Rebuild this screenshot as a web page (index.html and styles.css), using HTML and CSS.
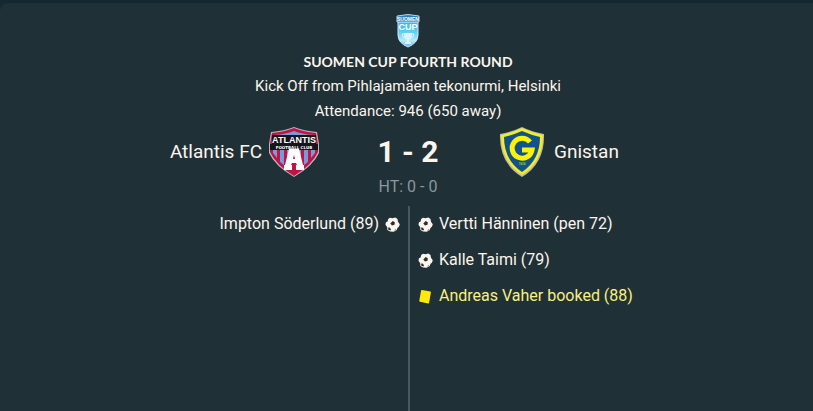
FILE: index.html
```html
<!DOCTYPE html>
<html lang="en">
<head>
  <meta charset="UTF-8">
  <meta name="viewport" content="width=device-width, initial-scale=1.0">
  <title>Atlantis FC 1 - 2 Gnistan</title>
  <link rel="stylesheet" href="styles.css">
</head>
<body>
  <!-- Shared icons -->
  <svg class="sprites" aria-hidden="true">
    <symbol id="ball" viewBox="0 0 15 15">
      <path fill="#fdf5ec" d="M5 .7 7.4 1.3 10.4.5 12.5 2 13 4.7 14.8 7.2 13.9 9.8 12.6 10.8 11.5 13.2 8.6 14.7 5 14.4 2.4 13 2.2 10.2.5 7.8.9 5.2 2.6 4.6 3.2 2Z"/>
      <path fill="#1f3037" d="M7.7 4 9.8 5.2 9.5 7.8 7 8.4 5.3 6.4ZM3 10.4 5 10.8 6 12.4 5.4 13.6 3.4 12.8ZM9.2 13.2 11 12 10.4 13.4Z"/>
    </symbol>
    <symbol id="card" viewBox="0 0 15 15">
      <path fill="#ffe80a" d="M4 .9 12.3 2.5Q13 2.7 12.9 3.4L11.1 13.8Q11 14.5 10.2 14.4L1.9 12.7Q1.1 12.5 1.3 11.8L3.1 1.5Q3.3.8 4 .9Z"/>
    </symbol>
  </svg>

  <main class="match">
    <header class="match-header">
      <svg class="cup-logo" viewBox="0 0 24 35" role="img" aria-label="Suomen Cup">
        <defs>
          <linearGradient id="cupFill" x1="0" y1="0" x2="0" y2="1">
            <stop offset="0" stop-color="#36b2ec"/>
            <stop offset=".45" stop-color="#6bd0f6"/>
            <stop offset=".75" stop-color="#b9ebfb"/>
            <stop offset="1" stop-color="#49b6ea"/>
          </linearGradient>
        </defs>
        <path d="M2 9H22V22Q22 30 12 34Q2 30 2 22Z" fill="url(#cupFill)" stroke="#d3eaf4"/>
        <path d="M1 3Q12 0 23 3V9H1Z" fill="#287fbd" stroke="#b4d5e5"/>
        <text x="12" y="8" class="cup-top">SUOMEN</text>
        <text x="12" y="17" class="cup-word">CUP</text>
        <path d="M8 20H16V23Q15 26 13 27V29H15V31H9V29H11V27Q9 26 8 23Z" fill="#d9f4fd"/>
        <path d="M8 21H6Q6 24 9 25M16 21H18Q18 24 15 25" fill="none" stroke="#d9f4fd"/>
      </svg>
      <h1 class="match-title">SUOMEN CUP FOURTH ROUND</h1>
      <p class="match-info">Kick Off from Pihlajamäen tekonurmi, Helsinki</p>
      <p class="match-info">Attendance: 946 (650 away)</p>
    </header>

    <section class="scoreboard">
      <div class="team home">
        <span class="team-name">Atlantis FC</span>
        <svg class="team-logo" viewBox="0 0 52 52" role="img" aria-label="Atlantis FC logo">
          <path d="M26 1Q36 5 49 6L51 18V27Q45 40 26 51Q7 40 1 27V18L3 6Q16 5 26 1Z" fill="#c3b4bb"/>
          <path d="M26 2Q36 6 48 7L50 18V26Q44 39 26 50Q8 39 2 26V18L4 7Q16 6 26 2Z" fill="#bd1645"/>
          <path fill="#7899dc" d="M7 9Q18 8 26 5Q34 8 45 9V13H7ZM5 22H9V32L5 27ZM12 22H16V39L12 36ZM19 22H23V44L19 41ZM29 22H33V41L29 44ZM36 22H40V36L36 39ZM43 22H47V27L43 32Z"/>
          <path fill="#17151b" d="M4 9H48V18H50V24H2V18H4Z"/>
          <text x="26" y="17" class="atl-name">ATLANTIS</text>
          <text x="26" y="23" class="atl-sub">FOOTBALL CLUB</text>
          <path fill="#fff" fill-rule="evenodd" d="M21 23H31L35 39H36V44H28V39H29L28 37H24L23 39H24V44H16V39H17ZM26 29 25 33H27Z"/>
        </svg>
      </div>
      <div class="score">1 - 2</div>
      <div class="team away">
        <svg class="team-logo" viewBox="0 0 52 52" role="img" aria-label="Gnistan logo">
          <path d="M26 1Q36 6 48 8Q49 37 26 51Q3 37 4 8Q16 6 26 1Z" fill="#b9bcae"/>
          <path d="M26 2Q36 7 47 9Q47 36 26 49Q5 36 5 9Q16 7 26 2Z" fill="#f4ed20"/>
          <path d="M26 5Q35 9 44 11Q44 34 26 46Q8 34 8 11Q17 9 26 5Z" fill="#10538b"/>
          <path d="M34 16A10 10 0 1 0 36 24H26" fill="none" stroke="#fff10b" stroke-width="5"/>
          <text x="26" y="39" class="gni-year">1924</text>
        </svg>
        <span class="team-name">Gnistan</span>
      </div>
    </section>
    <p class="half-time">HT: 0 - 0</p>

    <section class="events">
      <ul class="event-list home-events">
        <li>Impton Söderlund (89)<svg class="icon" role="img" aria-label="Goal"><use href="#ball"/></svg></li>
      </ul>
      <ul class="event-list away-events">
        <li><svg class="icon" role="img" aria-label="Goal"><use href="#ball"/></svg>Vertti Hänninen (pen 72)</li>
        <li><svg class="icon" role="img" aria-label="Goal"><use href="#ball"/></svg>Kalle Taimi (79)</li>
        <li class="booked"><svg class="icon" role="img" aria-label="Yellow card"><use href="#card"/></svg>Andreas Vaher booked (88)</li>
      </ul>
    </section>
  </main>
</body>
</html>
```

FILE: styles.css
```css
* {
  box-sizing: border-box;
}
body {
  margin: 0;
  min-height: 100vh;
  display: flex;
  padding-top: 3px;
  overflow: hidden;
  background-color: #15282f;
  color: #fdf5ec;
  font-family: Roboto, 'Liberation Sans', sans-serif;
}
.sprites {
  display: none;
}
/* The panel runs on past the right edge */
.match {
  flex: 1 0 auto;
  display: flex;
  flex-direction: column;
  margin-right: -3px;
  padding-top: 10px;
  background-color: #1f3037;
  border-radius: 8px 0 0 0;
}
.match-header {
  display: flex;
  flex-direction: column;
  align-items: center;
  text-align: center;
}
.cup-logo {
  width: 24px;
  height: 35px;
}
.match-title {
  margin: 2px 0 0;
  font-family: Lato, sans-serif;
  font-size: 14px;
  line-height: 24px;
  font-weight: 700;
}
.match-info {
  margin: 0;
  font-size: 15px;
  line-height: 25px;
}
.scoreboard {
  display: grid;
  grid-template-columns: 1fr 176px 1fr;
  align-items: center;
  margin-top: 2px;
}
.team {
  display: flex;
  align-items: center;
  gap: 6px;
  font-size: 19px;
}
.home {
  justify-content: flex-end;
}
.team-name,
.score {
  padding-bottom: 2px;
}
.team-logo {
  width: 52px;
  height: 52px;
}
.score {
  text-align: center;
  font-size: 30px;
  font-weight: 700;
}
.half-time {
  margin: 0;
  padding-bottom: 10px;
  color: #8b979b;
  font-size: 16px;
  line-height: 18px;
  text-align: center;
}
.events {
  flex: 1;
  display: grid;
  grid-template-columns: 1fr 1fr;
}
.event-list {
  margin: 0;
  padding: 0 8px;
  list-style: none;
  font-size: 16px;
  line-height: 36px;
}
.event-list li {
  display: flex;
  align-items: center;
  gap: 6px;
}
.home-events li {
  justify-content: flex-end;
}
.away-events {
  border-left: 2px solid #4b575e;
}
.booked {
  color: #f9f17c;
}
.icon {
  width: 15px;
  height: 15px;
}

/* Lettering inside the logos */
.cup-top,
.cup-word,
.atl-name,
.atl-sub,
.gni-year {
  font-family: 'Liberation Sans', sans-serif;
  font-weight: 700;
  text-anchor: middle;
  fill: #fff;
}
.cup-top {
  font-size: 5px;
}
.cup-word {
  font-size: 9px;
}
.atl-name {
  font-size: 9px;
}
.atl-sub {
  font-family: 'DejaVu Sans', sans-serif;
  font-size: 4px;
}
.gni-year {
  font-size: 3px;
  fill: #b8bd4e;
}
```
